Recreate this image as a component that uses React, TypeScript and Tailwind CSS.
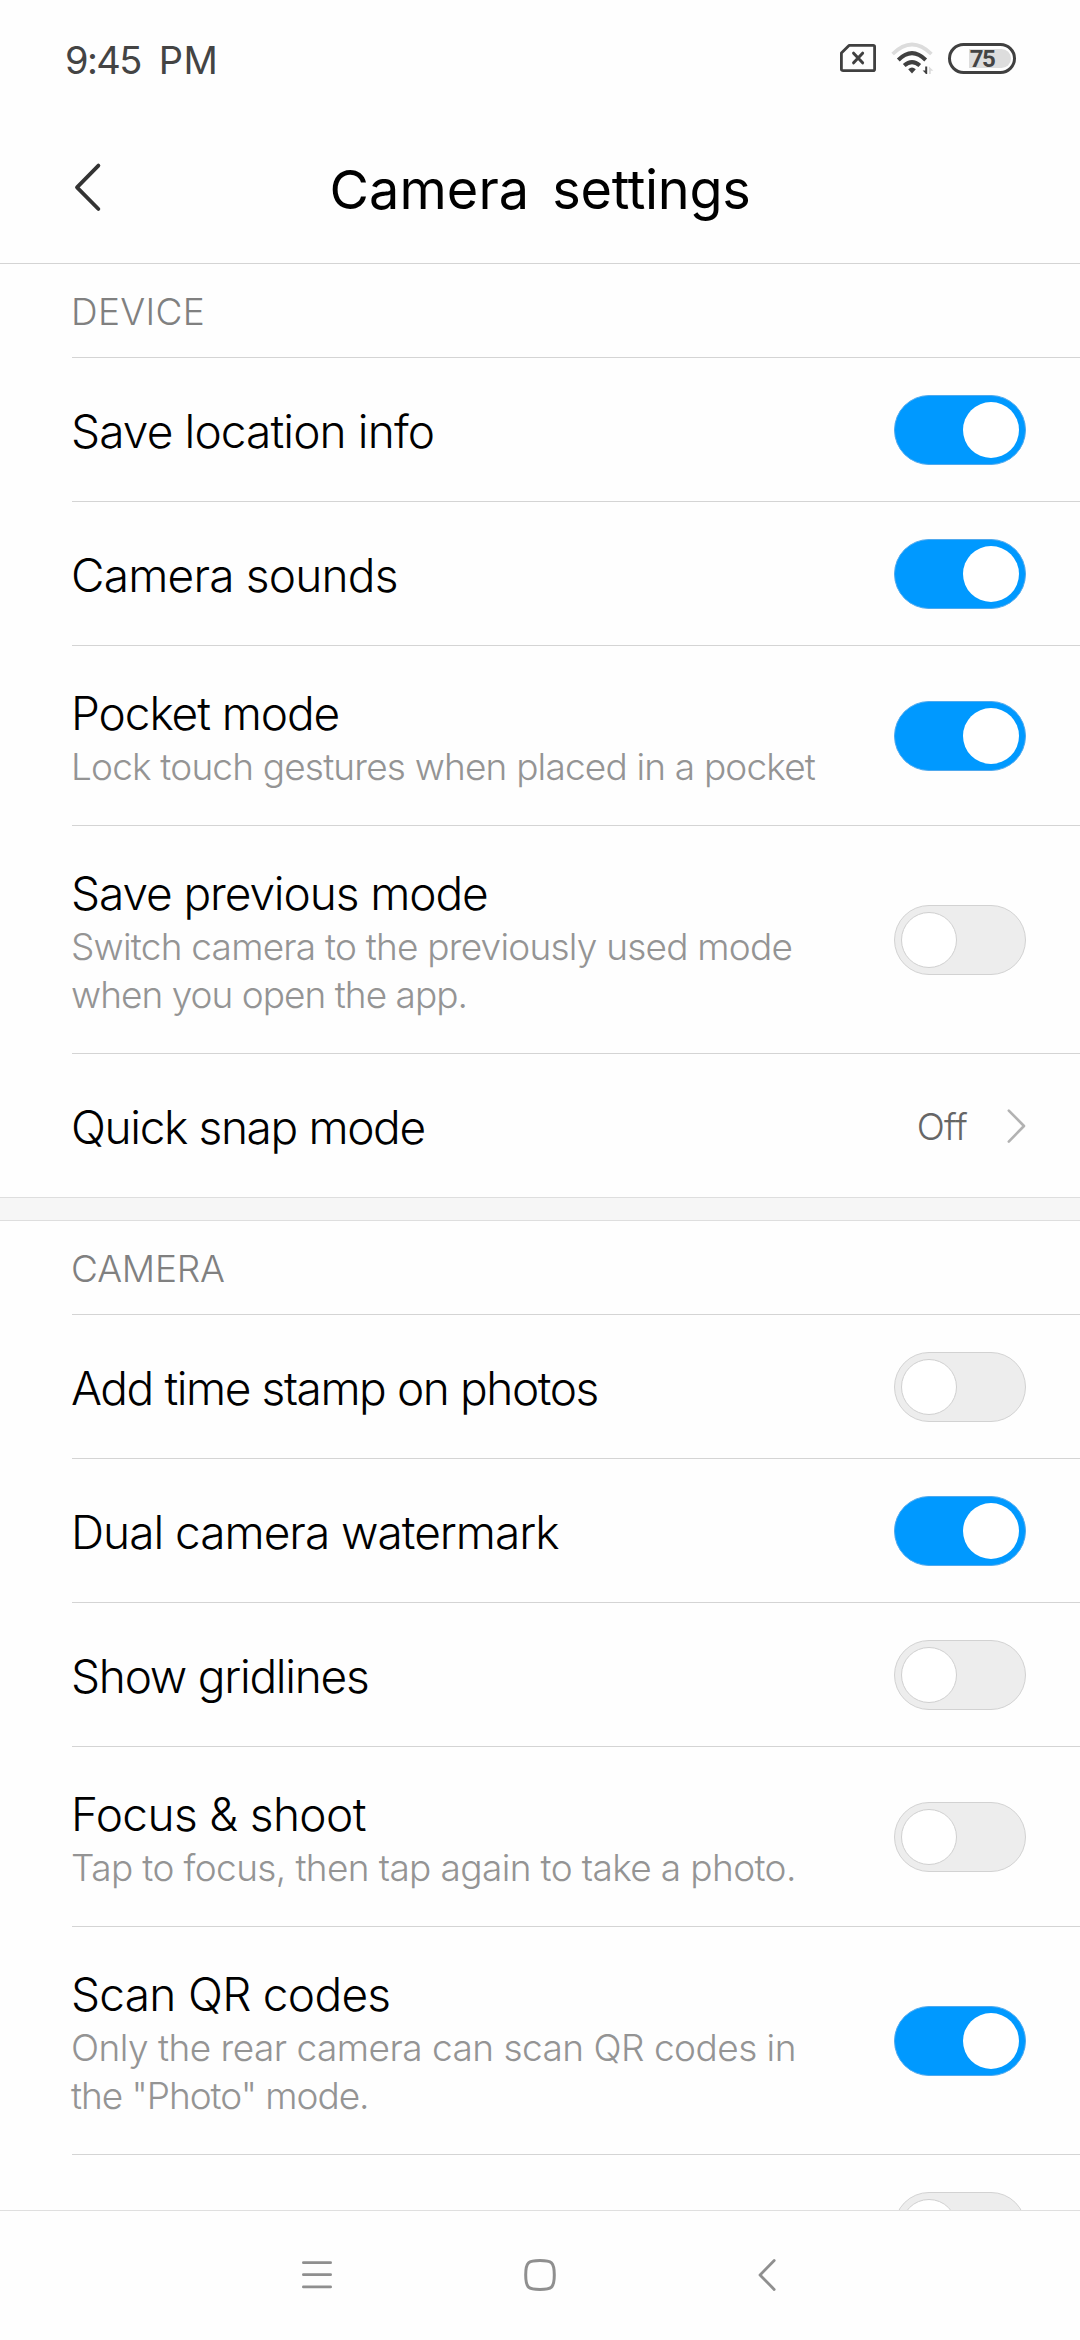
import React from "react";

type Line = { text: string; tracking: string };
type Setting = {
  title: Line;
  description?: Line[];
  on?: boolean;
  value?: string;
};

const device: Setting[] = [
  { title: { text: "Save location info", tracking: "tracking-[-0.87px]" }, on: true },
  { title: { text: "Camera sounds", tracking: "tracking-[-0.79px]" }, on: true },
  {
    title: { text: "Pocket mode", tracking: "tracking-[-1.08px]" },
    description: [{ text: "Lock touch gestures when placed in a pocket", tracking: "tracking-[-0.82px]" }],
    on: true,
  },
  {
    title: { text: "Save previous mode", tracking: "tracking-[-1.09px]" },
    description: [
      { text: "Switch camera to the previously used mode", tracking: "tracking-[-0.78px]" },
      { text: "when you open the app.", tracking: "tracking-[-0.97px]" },
    ],
    on: false,
  },
  { title: { text: "Quick snap mode", tracking: "tracking-[-1.36px]" }, value: "Off" },
];

const camera: Setting[] = [
  { title: { text: "Add time stamp on photos", tracking: "tracking-[-1.41px]" }, on: false },
  { title: { text: "Dual camera watermark", tracking: "tracking-[-1px]" }, on: true },
  { title: { text: "Show gridlines", tracking: "tracking-[-1.26px]" }, on: false },
  {
    title: { text: "Focus & shoot", tracking: "tracking-[-0.61px]" },
    description: [{ text: "Tap to focus, then tap again to take a photo.", tracking: "tracking-[-0.62px]" }],
    on: false,
  },
  {
    title: { text: "Scan QR codes", tracking: "tracking-[-0.71px]" },
    description: [
      { text: "Only the rear camera can scan QR codes in", tracking: "tracking-[-0.52px]" },
      { text: 'the "Photo" mode.', tracking: "tracking-[-1.05px]" },
    ],
    on: true,
  },
  { title: { text: "", tracking: "" }, on: false },
];

function Switch({ on }: { on: boolean }) {
  return on ? (
    <div className="flex h-[70px] w-[132px] shrink-0 items-center justify-end rounded-full border border-[#4fa9ee] bg-[#0099ff] pr-[6px]">
      <div className="size-14 rounded-full bg-white" />
    </div>
  ) : (
    <div className="flex h-[70px] w-[132px] shrink-0 items-center rounded-full border border-[#d2d2d2] bg-[#ededed] pl-[6px]">
      <div className="size-14 rounded-full border border-[#d0d0d0] bg-white" />
    </div>
  );
}

function Row({ item, last }: { item: Setting; last: boolean }) {
  const lines = item.description ?? [];
  const height = lines.length === 2 ? "h-[228px]" : lines.length === 1 ? "h-[180px]" : "h-36";
  return (
    <div className={`ml-[72px] flex shrink-0 items-center justify-between pr-[54px] ${height} ${last ? "" : "border-b border-[#d4d4d4]"}`}>
      <div className="-ml-px whitespace-nowrap pt-[3px]">
        <div className={`text-[46px] leading-[59px] text-black ${item.title.tracking}`}>{item.title.text}</div>
        {lines.map((line) => (
          <div key={line.text} className={`text-[37px] leading-[48px] text-[#949494] ${line.tracking}`}>
            {line.text}
          </div>
        ))}
      </div>
      {item.value ? (
        <div className="flex items-center">
          <span className="mr-10 pt-px text-[37px] leading-[48px] tracking-[-0.72px] text-[#666666]">{item.value}</span>
          <svg className="h-9 w-[19px]" viewBox="0 0 19 36" fill="none" stroke="#b2b2b2" strokeWidth="2.6" strokeLinecap="round" strokeLinejoin="round">
            <path d="M1.8 2.6 17 18 1.8 33.6" />
          </svg>
        </div>
      ) : (
        <Switch on={!!item.on} />
      )}
    </div>
  );
}

function Section({ title, tracking, items, lastBordered }: { title: string; tracking: string; items: Setting[]; lastBordered: boolean }) {
  return (
    <section className="flex shrink-0 flex-col">
      <h2 className={`ml-[72px] flex h-[94px] shrink-0 items-center border-b border-[#d4d4d4] pt-[3px] text-[37px] text-[#808080] ${tracking}`}>
        <span className="-ml-px">{title}</span>
      </h2>
      {items.map((item, i) => (
        <Row key={i} item={item} last={!lastBordered && i === items.length - 1} />
      ))}
    </section>
  );
}

function StatusBar() {
  return (
    <div className="flex h-[118px] shrink-0 items-center justify-between pl-[65px] pr-16 text-[#444444]">
      <div className="flex gap-[18px] pt-px text-[38px] leading-none font-normal">
        <span className="tracking-[-1.6px]">9:45</span>
        <span className="tracking-[0.4px]">PM</span>
      </div>
      <div className="flex items-center pb-[2px]">
        <svg className="h-[30px] w-[38px]" viewBox="0 0 38 30" fill="none" stroke="#404040" strokeWidth="2.8" strokeLinejoin="round" strokeLinecap="round">
          <path d="M10 2.4H34.2Q35.6 2.4 35.6 3.8V26.2Q35.6 27.6 34.2 27.6H4.2Q2.4 27.6 2.4 26.2V10Z" />
          <path d="M14.6 10.2 23.6 19.8M23.6 10.2 14.6 19.8" strokeWidth="3" />
        </svg>
        <svg className="ml-[14px] h-8 w-[44px]" viewBox="0 0 44 32" fill="none" strokeWidth="4">
          <path d="M1.6 12Q21 -7 40.4 12" stroke="#dcdcdc" strokeWidth="3.6" />
          <path d="M7.3 18Q21 4.4 34.7 18" stroke="#404040" />
          <path d="M13.2 23.6Q21 16.6 28.8 23.6" stroke="#404040" />
          <path d="M17.2 27.2Q21 23.6 24.8 27.2L21 31.4Z" fill="#404040" />
          <path d="M34.2 24.4H36.2V33H34.6V31.6L31.6 28.6 34.2 28.4Z" fill="#404040" />
          <path d="M38 24.4 42.4 28.8H39.8V32H38Z" fill="#dcdcdc" />
        </svg>
        <div className="relative ml-[13px] flex h-[31px] w-[68px] items-center justify-center rounded-full border-[3px] border-[#404040]">
          <div className="absolute top-[3px] right-[2px] h-[19px] w-[42px] rounded-r-full bg-[#dddddd]" />
          <span className="relative mt-[1px] font-['Roboto'] text-[24px] leading-none font-bold tracking-[-1.5px]">75</span>
        </div>
      </div>
    </div>
  );
}

function Header() {
  return (
    <header className="relative flex h-[146px] shrink-0 items-center justify-center border-b border-[#d4d4d4] pb-[2px]">
      <svg className="absolute top-[44px] left-[74px] h-[50px] w-[28px]" viewBox="0 0 28 50" fill="none" stroke="#333333" strokeWidth="3.8" strokeLinecap="round" strokeLinejoin="round">
        <path d="M24.4 3.6 3 25.4 24.4 47" />
      </svg>
      <h1 className="flex gap-[23px] text-[54px] leading-none font-normal text-black">
        <span className="tracking-[0.1px]">Camera</span>
        <span className="tracking-[-0.3px]">settings</span>
      </h1>
    </header>
  );
}

function NavBar() {
  return (
    <nav className="flex h-[130px] shrink-0 items-center border-t border-[#dfdfdf] pb-px pl-[302px]">
      <svg className="h-8 w-[30px]" viewBox="0 0 30 32" stroke="#8f8f8f" strokeWidth="2.8" strokeLinecap="round">
        <path d="M1.4 3.7H28.6M1.4 15.7H28.6M1.4 27.9H28.6" />
      </svg>
      <svg className="ml-[192px] h-8 w-8" viewBox="0 0 32 32" fill="none" stroke="#8f8f8f" strokeWidth="3">
        <path d="M16 1.6C27.5 1.6 30.3 3 30.3 16S27.5 30.4 16 30.4 1.7 29 1.7 16 4.5 1.6 16 1.6Z" />
      </svg>
      <svg className="ml-[202px] h-8 w-[18px]" viewBox="0 0 18 32" fill="none" stroke="#8f8f8f" strokeWidth="2.8" strokeLinecap="round" strokeLinejoin="round">
        <path d="M16.2 1.6 2 16 16.2 30.4" />
      </svg>
    </nav>
  );
}

export default function App() {
  return (
    <div className="flex h-[2340px] w-[1080px] flex-col overflow-hidden bg-[#fefefe] font-['Inter',sans-serif] font-light">
      <StatusBar />
      <Header />
      <main className="flex min-h-0 flex-1 flex-col overflow-hidden">
        <Section title="DEVICE" tracking="tracking-[0.3px]" items={device} lastBordered={false} />
        <div className="-mt-px h-6 shrink-0 border-y border-[#dedede] bg-[#f6f6f6]" />
        <Section title="CAMERA" tracking="tracking-[-0.2px]" items={camera} lastBordered />
      </main>
      <NavBar />
    </div>
  );
}
